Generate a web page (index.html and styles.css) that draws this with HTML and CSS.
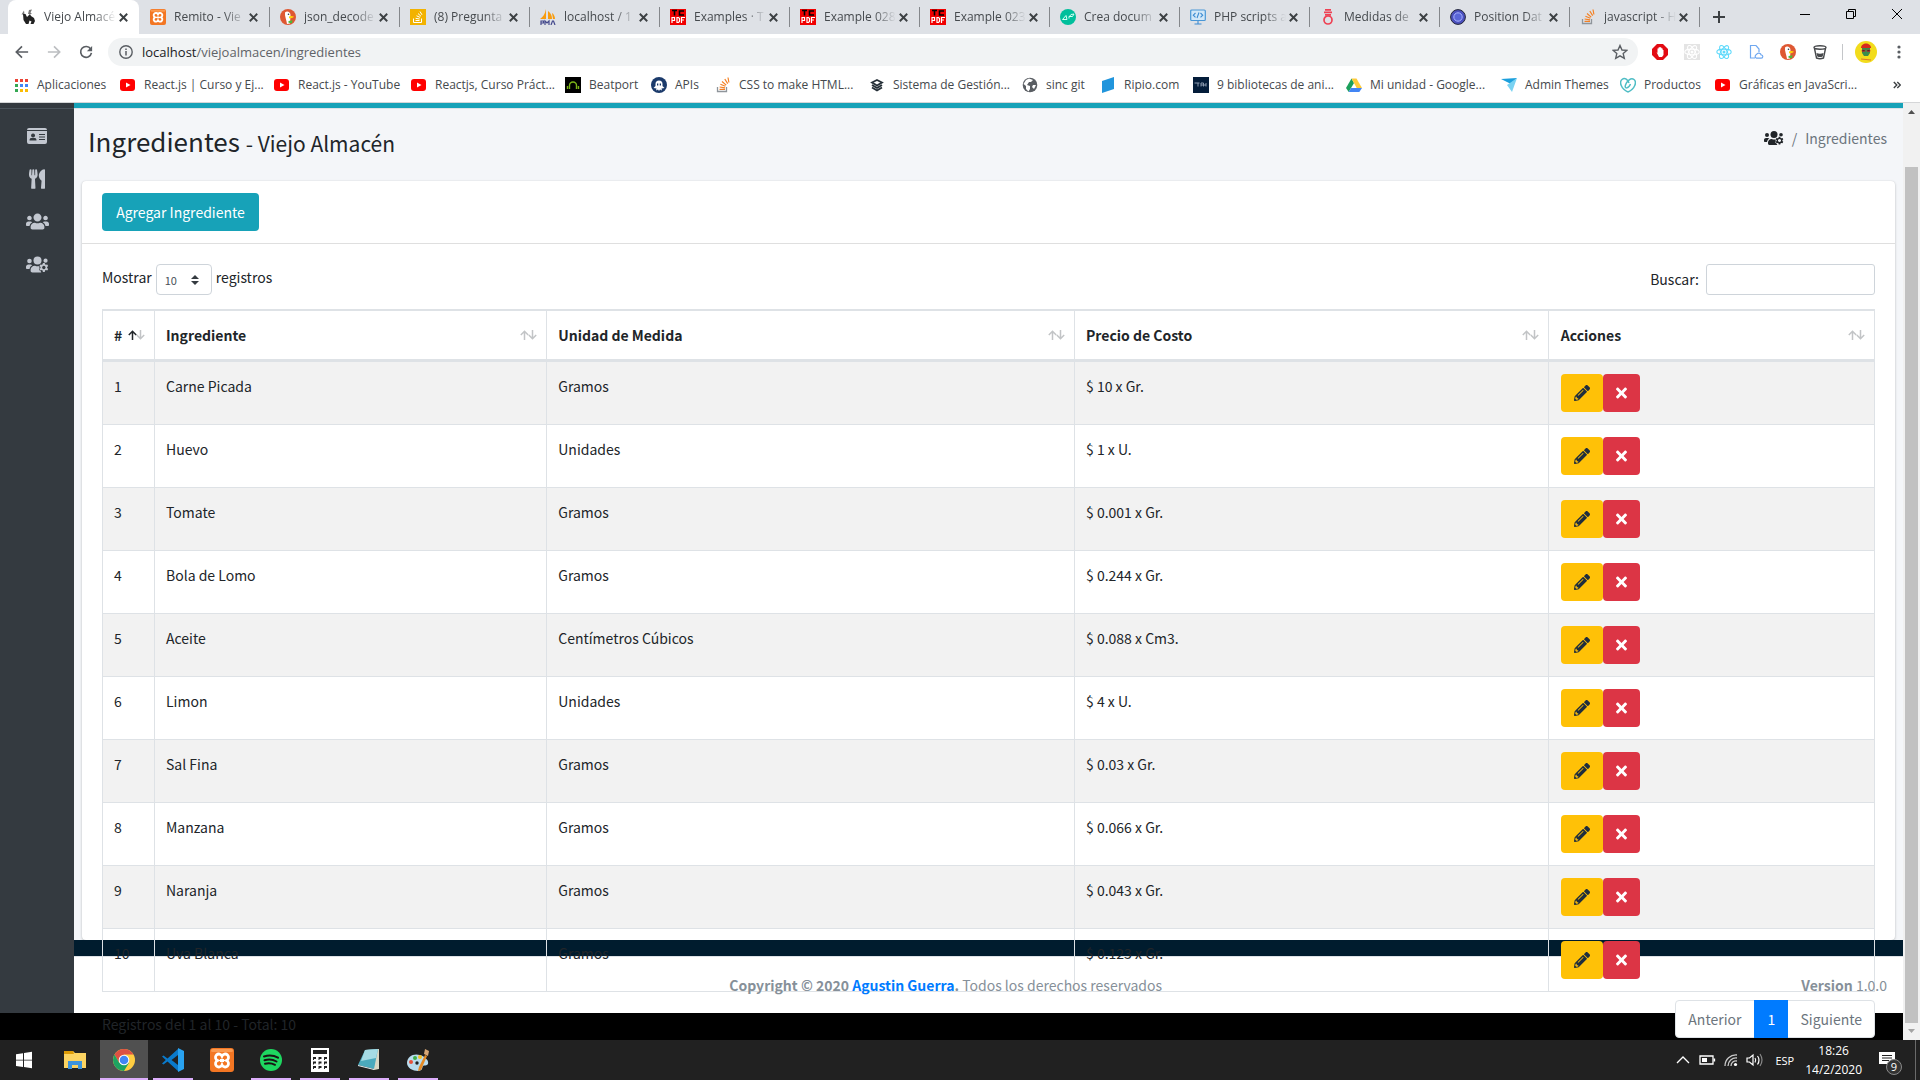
FILE: index.html
```html
<!DOCTYPE html>
<html lang="es">
<head>
<meta charset="utf-8">
<title>Ingredientes - Viejo Almacén</title>
<link rel="stylesheet" href="styles.css">
</head>
<body>
<svg class="defs" aria-hidden="true">
  <symbol id="x" viewBox="0 0 8 8"><path d="M.7.7l6.6 6.6M7.3.7L.7 7.3" stroke="#3c4043" stroke-width="1.7"/></symbol>
  <symbol id="yt" viewBox="0 0 16 16"><rect x="0" y="2" width="15" height="12" rx="3" fill="#f00"/><path d="M6 5.500l4.500 2.500L6 10.500z" fill="#fff"/></symbol>
  <symbol id="pdf" viewBox="0 0 16 16"><rect width="16" height="16" fill="#f00000"/><path d="M2 1.500h5M4.500 1.500v5M14 2h-4.500v4H14" stroke="#000" stroke-width="1.600" fill="none"/><path d="M2 14V8.500h2.500v3H2M7 8.500v5h1.500l1-1v-3l-1-1zM11.500 14V8.500H15M11.500 11H14" stroke="#fff" stroke-width="1.200" fill="none"/></symbol>
  <symbol id="so" viewBox="0 0 16 16"><path d="M2.500 10v4.500h9V10" stroke="#8f959b" stroke-width="1.300" fill="none"/><path d="M4.500 12.300h5.500M4.600 10l5.400.8M5.400 7.300l5 2M7 4.500l4.200 3.600M9.800 2l2.900 4.600M13 .5l.9 5" stroke="#f48024" stroke-width="1.200"/></symbol>
  <symbol id="xampp" viewBox="0 0 24 24"><rect width="24" height="24" rx="3" fill="#f37623"/><rect x="1" y="1" width="22" height="3" rx="1.500" fill="#fb9a50"/><path d="M7.500 12.500A3.400 3.400 0 1 1 12 8a3.400 3.400 0 1 1 4.500 4.500A3.400 3.400 0 1 1 12 17a3.400 3.400 0 1 1-4.500-4.500zM10 12.500h4" fill="none" stroke="#fff" stroke-width="2.800"/></symbol>
  <symbol id="duck" viewBox="0 0 16 16"><circle cx="8" cy="8" r="8" fill="#de5833"/><path d="M5 3.500C7 1.500 10.500 3 10.500 6l-.5 8.500-3 .5C6.500 11 4.500 7 5 3.500z" fill="#fff"/><path d="M9 7.500c2-.8 4-.5 5 .2-1.500 1.300-3 1.800-5 1.600z" fill="#fdd20a"/><path d="M8.500 12l4-.8-.5 3-3.500-.5z" fill="#4cba3c"/><circle cx="8.500" cy="5.200" r=".8" fill="#234"/></symbol>
  <symbol id="react" viewBox="0 0 16 16"><g fill="none" stroke="currentColor" stroke-width="1.100"><ellipse cx="8" cy="8" rx="7.200" ry="2.900"/><ellipse cx="8" cy="8" rx="7.200" ry="2.900" transform="rotate(60 8 8)"/><ellipse cx="8" cy="8" rx="7.200" ry="2.900" transform="rotate(120 8 8)"/></g><circle cx="8" cy="8" r="1.500" fill="currentColor"/></symbol>
  <symbol id="users" viewBox="0 0 640 512"><path d="M96 224c35.300 0 64-28.700 64-64s-28.700-64-64-64-64 28.700-64 64 28.700 64 64 64zm448 0c35.300 0 64-28.700 64-64s-28.700-64-64-64-64 28.700-64 64 28.700 64 64 64zm32 32h-64c-17.600 0-33.500 7.100-45.100 18.600 40.300 22.100 68.900 62 75.100 109.400h66c17.700 0 32-14.300 32-32v-32c0-35.300-28.700-64-64-64zm-256 0c61.900 0 112-50.100 112-112S381.900 32 320 32 208 82.100 208 144s50.100 112 112 112zm76.800 32h-8.300c-20.800 10-43.900 16-68.500 16s-47.600-6-68.500-16h-8.300C179.600 288 128 339.600 128 403.200V432c0 26.500 21.500 48 48 48h288c26.500 0 48-21.500 48-48v-28.800c0-63.600-51.600-115.200-115.200-115.200zm-223.700-13.400C161.500 263.100 145.600 256 128 256H64c-35.300 0-64 28.700-64 64v32c0 17.700 14.300 32 32 32h65.900c6.300-47.400 34.900-87.300 75.200-109.400z" fill="currentColor"/></symbol>
  <symbol id="userscog" viewBox="0 0 640 512"><g fill="currentColor"><circle cx="96" cy="160" r="64"/><circle cx="544" cy="150" r="58"/><circle cx="320" cy="144" r="112"/><path d="M173 275C161 263 146 256 128 256H64c-35 0-64 29-64 64v32c0 18 14 32 32 32h66c6-47 35-87 75-109zM252 288h-9c-63 0-115 52-115 115v29c0 27 21 48 48 48h250l-20-40-42-30 12-50-8-62c-42 18-76 9-116-10z"/><path fill-rule="evenodd" d="M470 214h52l8 38 24 14 37-12 26 45-29 26v28l29 26-26 45-37-12-24 14-8 38h-52l-8-38-24-14-37 12-26-45 29-26v-28l-29-26 26-45 37 12 24-14zM496 291a48 48 0 1 0 1 0z"/></g></symbol>
  <symbol id="utensils" viewBox="0 0 416 512"><path fill="currentColor" d="M207.900 15.200c.8 4.700 16.100 94.500 16.100 128.800 0 52.300-27.800 89.600-68.900 104.600L168 486.700c.7 13.700-10.200 25.300-24 25.300H80c-13.700 0-24.700-11.500-24-25.300l12.900-238.100C27.700 233.600 0 196.200 0 144 0 109.600 15.300 19.900 16.100 15.200 19.300-5.100 61.400-5.400 64 16.300v141.200c1.300 3.400 15.100 3.200 16 0 1.400-25.300 7.900-139.200 8-141.800 3.300-20.800 44.700-20.800 47.900 0 .2 2.700 6.600 116.500 8 141.800.9 3.200 14.800 3.400 16 0V16.300c2.600-21.600 44.800-21.400 48-1.100zm119.200 285.700l-15 185.100c-1.200 14 9.900 26 23.900 26h56c13.300 0 24-10.700 24-24V24c0-13.200-10.700-24-24-24-82.500 0-221.400 178.500-64.900 300.900z"/></symbol>
  <symbol id="pencil" viewBox="0 0 512 512"><path fill="currentColor" fill-rule="evenodd" d="M497.900 142.100l-46.100 46.100c-4.700 4.700-12.300 4.700-17 0l-111-111c-4.700-4.700-4.700-12.300 0-17l46.100-46.100c18.700-18.700 49.100-18.700 67.900 0l60.100 60.100c18.800 18.700 18.800 49.100 0 67.900zM284.200 99.800L21.600 362.400.4 483.900c-2.900 16.400 11.400 30.600 27.800 27.800l121.500-21.300 262.600-262.600c4.700-4.700 4.700-12.300 0-17l-111-111c-4.800-4.700-12.400-4.700-17.100 0zM124.100 339.900c-5.500-5.500-5.500-14.300 0-19.800l154-154c5.500-5.500 14.300-5.500 19.800 0s5.500 14.300 0 19.800l-154 154c-5.500 5.500-14.300 5.500-19.800 0zM88 424h48v36.300l-64.500 11.300-31.100-31.100L51.700 376H88v48z"/></symbol>
  <symbol id="times" viewBox="0 0 352 512"><path fill="currentColor" d="M242.720 256l100.070-100.070c12.280-12.280 12.280-32.190 0-44.480l-22.240-22.240c-12.280-12.280-32.190-12.280-44.480 0L176 189.280 75.930 89.210c-12.280-12.280-32.190-12.280-44.480 0L9.210 111.450c-12.280 12.280-12.280 32.190 0 44.480L109.280 256 9.210 356.070c-12.280 12.280-12.280 32.190 0 44.480l22.240 22.240c12.280 12.280 32.200 12.280 44.480 0L176 322.720l100.070 100.070c12.280 12.280 32.200 12.280 44.480 0l22.240-22.240c12.280-12.280 12.280-32.190 0-44.480L242.720 256z"/></symbol>
  <symbol id="sort" viewBox="0 0 17 10"><g fill="none" stroke-width="1.500"><path class="down" d="M12.500 0v8.500M8.800 5l3.700 3.700L16.200 5"/><path class="up" d="M4.500 10V1.500M.8 5l3.700-3.700L8.200 5"/></g></symbol>
</svg>

<header class="chrome">
  <div class="tabstrip">
    <div class="tab active"><svg class="ico" viewBox="0 0 16 16"><path d="M1.500 5.500l2.500-4 .5 4zM8 5l1-4 3-.5-1.500 3L12 5z" fill="#777"/><path d="M3 5h2.500l1.500 3 3-3 1 2 3 2 1 3-1.500 3h-3l1-2.500-2-1-1 3.500H6l-2.500-4z" fill="#222"/></svg><span>Viejo Almacé</span><button aria-label="Cerrar"><svg><use href="#x"/></svg></button></div>
    <div class="tab"><svg class="ico"><use href="#xampp"/></svg><span>Remito - Vie</span><button aria-label="Cerrar"><svg><use href="#x"/></svg></button></div>
    <div class="tab"><svg class="ico"><use href="#duck"/></svg><span>json_decode</span><button aria-label="Cerrar"><svg><use href="#x"/></svg></button></div>
    <div class="tab"><svg class="ico" viewBox="0 0 16 16"><rect width="16" height="16" fill="#f2b200"/><path d="M3.500 9.500v4h8v-4M5.500 11.500h4M5.600 9.300l4 .7M6.500 6.800l3.600 1.600M8 4.500l3 2.800M10 2.500l2 3.300" stroke="#fff" fill="none"/></svg><span>(8) Pregunta</span><button aria-label="Cerrar"><svg><use href="#x"/></svg></button></div>
    <div class="tab"><svg class="ico" viewBox="0 0 16 16"><path d="M6 0v10H0c3-2 5-5 6-10zM8 2c3 2 4 5 4 8H8zM12 4c2 1 3 4 3 6h-2z" fill="#f89c0e"/><path d="M1 16v-4h2.500v2H1M5 16v-4l2 2 2-2v4M11 16l1.500-4h1l1.500 4" stroke="#44498c" stroke-width="1.200" fill="none"/></svg><span>localhost / 1</span><button aria-label="Cerrar"><svg><use href="#x"/></svg></button></div>
    <div class="tab"><svg class="ico"><use href="#pdf"/></svg><span>Examples · T</span><button aria-label="Cerrar"><svg><use href="#x"/></svg></button></div>
    <div class="tab"><svg class="ico"><use href="#pdf"/></svg><span>Example 028</span><button aria-label="Cerrar"><svg><use href="#x"/></svg></button></div>
    <div class="tab"><svg class="ico"><use href="#pdf"/></svg><span>Example 023</span><button aria-label="Cerrar"><svg><use href="#x"/></svg></button></div>
    <div class="tab"><svg class="ico" viewBox="0 0 16 16"><circle cx="8" cy="8" r="8" fill="#00bf9c"/><path d="M2.500 10.500h4.500L6 6.500zM9 8l2-2.500 3-.5-1.500 2.500H9v2" stroke="#d5fff5" fill="none"/></svg><span>Crea docum</span><button aria-label="Cerrar"><svg><use href="#x"/></svg></button></div>
    <div class="tab"><svg class="ico" viewBox="0 0 16 16"><rect x=".7" y="1" width="14.600" height="10.500" rx="1" fill="#d3e8f8" stroke="#4a97d6" stroke-width="1.200"/><path d="M8 12v3M4.500 15h7M5.500 4L3.300 6.200l2.200 2.200M10.500 4l2.200 2.200-2.200 2.200M9 3.500L7 9" stroke="#3d8cd2" stroke-width="1.100" fill="none"/></svg><span>PHP scripts a</span><button aria-label="Cerrar"><svg><use href="#x"/></svg></button></div>
    <div class="tab"><svg class="ico" viewBox="0 0 16 16"><g fill="none" stroke="#ee4153" stroke-width="1.700"><circle cx="8" cy="11" r="4"/><path d="M5 .9h6M4 3.400h8M5 5.900h6"/></g></svg><span>Medidas de</span><button aria-label="Cerrar"><svg><use href="#x"/></svg></button></div>
    <div class="tab"><svg class="ico" viewBox="0 0 16 16"><circle cx="8" cy="8" r="7.400" fill="#4b50bd" stroke="#232637"/><circle cx="8" cy="8" r="4.200" fill="#5a66d8" stroke="#a9b2ff"/></svg><span>Position Dat</span><button aria-label="Cerrar"><svg><use href="#x"/></svg></button></div>
    <div class="tab"><svg class="ico"><use href="#so"/></svg><span>javascript - H</span><button aria-label="Cerrar"><svg><use href="#x"/></svg></button></div>
    <button class="newtab" aria-label="Nueva pestaña"><svg viewBox="0 0 12 12"><path d="M6 0v12M0 6h12" stroke="#3c4043" stroke-width="2"/></svg></button>
    <div class="winctl">
      <button aria-label="Minimizar"><svg viewBox="0 0 10 10"><path d="M0 5.500h10" stroke="#000"/></svg></button>
      <button aria-label="Restaurar"><svg viewBox="0 0 10 10"><path d="M.5 2.500h7v7h-7zM2.500 2.500v-2h7v7h-2" fill="none" stroke="#000"/></svg></button>
      <button aria-label="Cerrar ventana"><svg viewBox="0 0 10 10"><path d="M0 0l10 10M10 0L0 10" stroke="#000"/></svg></button>
    </div>
  </div>

  <div class="toolbar">
    <button class="nav" aria-label="Atrás"><svg viewBox="0 0 16 16"><path d="M15 8H2M8 1.500L1.500 8 8 14.500" fill="none" stroke="#5a5e63" stroke-width="1.900"/></svg></button>
    <button class="nav" aria-label="Adelante"><svg viewBox="0 0 16 16"><path d="M1 8h13M8 1.500L14.500 8 8 14.500" fill="none" stroke="#bcbec1" stroke-width="1.900"/></svg></button>
    <button class="nav" aria-label="Recargar"><svg viewBox="0 0 16 16"><path d="M13.300 4.500A6.200 6.200 0 1 0 14.200 9" fill="none" stroke="#5a5e63" stroke-width="1.900"/><path d="M15 1v6H9z" fill="#5a5e63"/></svg></button>
    <div class="omnibox">
      <svg viewBox="0 0 14 14"><circle cx="7" cy="7" r="6.200" fill="none" stroke="#5a5e63" stroke-width="1.400"/><path d="M7 6v4.500M7 3.500V5" stroke="#5a5e63" stroke-width="1.500"/></svg>
      <span class="url"><b>localhost</b>/viejoalmacen/ingredientes</span>
      <svg class="star" viewBox="0 0 16 16"><path d="M8 1.500l2 4.500 4.800.4-3.600 3.200 1.100 4.800L8 11.800l-4.300 2.600 1.100-4.800L1.200 6.400 6 6z" fill="none" stroke="#5a5e63" stroke-width="1.400"/></svg>
    </div>
    <div class="exts">
      <svg viewBox="0 0 16 16"><path d="M5 0h6l5 5v6l-5 5H5l-5-5V5z" fill="#e30b13"/><path d="M4.500 8l1 1V4.500h1V3.500h1V3h1.200v.7h1v.8h1V6h.8v5L10 13H7z" fill="#fff"/></svg>
      <svg class="off" viewBox="0 0 16 16"><use href="#react"/></svg>
      <svg class="on" viewBox="0 0 16 16"><use href="#react"/></svg>
      <svg viewBox="0 0 16 16"><path d="M7 14H2.500V1.500H8L11 5v3M8 14a2 2 0 0 1 .5-3.500 2.500 2.500 0 0 1 4.700.5 1.600 1.600 0 0 1 0 3.200H8" fill="none" stroke="#70a8f0" stroke-width="1.200"/></svg>
      <svg viewBox="0 0 16 16"><use href="#duck"/></svg>
      <svg viewBox="0 0 16 16"><ellipse cx="8" cy="3.500" rx="6" ry="1.800" fill="none" stroke="#47494c" stroke-width="1.400"/><path d="M2.500 4.500l2 9.500q3.500 1.500 7 0l2-9.500" fill="none" stroke="#47494c" stroke-width="1.400"/><path d="M4.500 9q3.500 1.500 7 0l-.8 3.500q-2.700 1-5.400 0z" fill="#47494c"/></svg>
      <i></i>
      <svg class="avatar" viewBox="0 0 22 22"><circle cx="11" cy="11" r="11" fill="#f2dc1c"/><path d="M6 7c0-6 10-6 10 0z" fill="#d62a1f"/><path d="M7 7h8v5l-2 3H9l-2-3z" fill="#3b8b4c"/><path d="M7 9h3v1.500H7zM12 9h3v1.500h-3zM6 18l10 1" fill="#222" stroke="#c33" stroke-width=".6"/></svg>
      <svg class="dots" viewBox="0 0 4 14"><g fill="#5a5e63"><circle cx="2" cy="2" r="1.600"/><circle cx="2" cy="7" r="1.600"/><circle cx="2" cy="12" r="1.600"/></g></svg>
    </div>
  </div>

  <nav class="bookmarks">
    <a href="#"><svg class="ico" viewBox="0 0 16 16"><path d="M2 2h3v3H2zM7 2h3v3H7zM12 2h3v3h-3z" fill="#ea4335"/><path d="M2 7h3v3H2z" fill="#34a853"/><path d="M7 7h3v3H7zM12 7h3v3h-3z" fill="#4285f4"/><path d="M2 12h3v3H2z" fill="#34a853"/><path d="M7 12h3v3H7zM12 12h3v3h-3z" fill="#fbbc05"/></svg><span>Aplicaciones</span></a>
    <a href="#"><svg class="ico"><use href="#yt"/></svg><span>React.js | Curso y Ej...</span></a>
    <a href="#"><svg class="ico"><use href="#yt"/></svg><span>React.js - YouTube</span></a>
    <a href="#"><svg class="ico"><use href="#yt"/></svg><span>Reactjs, Curso Práct...</span></a>
    <a href="#"><svg class="ico" viewBox="0 0 16 16"><rect width="16" height="16" fill="#000"/><path d="M4.500 12V8.500a3.500 3.500 0 0 1 7 0V12M2.500 9v3M13.500 9v3" stroke="#7cb518" stroke-width="1.400" fill="none"/></svg><span>Beatport</span></a>
    <a href="#"><svg class="ico" viewBox="0 0 16 16"><circle cx="8" cy="8" r="8" fill="#1b3a6b"/><path d="M4.500 7a3.500 3.500 0 0 1 7 0v2l2 2-3 .5.5 2-2-1L8 14l-1-1.500-2 1 .5-2-3-.5 2-2z" fill="#fff"/><path d="M6 6.500h1.300v2H6zM8.700 6.500H10v2H8.700z" fill="#1b3a6b"/></svg><span>APIs</span></a>
    <a href="#"><svg class="ico"><use href="#so"/></svg><span>CSS to make HTML...</span></a>
    <a href="#"><svg class="ico" viewBox="0 0 16 16"><path d="M8 3l5 2.500-5 3-5-3zM3 10.500l5 3 5-3M3 8l5 3 5-3" fill="none" stroke="#263038" stroke-width="1.800"/></svg><span>Sistema de Gestión...</span></a>
    <a href="#"><svg class="ico" viewBox="0 0 16 16"><circle cx="8" cy="8" r="7.300" fill="#5a5e63"/><path d="M7 1.500l4 1.500-2 2H7L5 8l3 1v3l-1.500 2.500L4 12V9L1.500 7 4 3zM11 8h3l-2 4-2-2z" fill="#fff"/></svg><span>sinc git</span></a>
    <a href="#"><svg class="ico" viewBox="0 0 16 16"><path d="M2 4l12-4v12L2 16z" fill="#2195dc"/></svg><span>Ripio.com</span></a>
    <a href="#"><svg class="ico" viewBox="0 0 16 16"><rect width="16" height="16" fill="#041d3a"/><path d="M1.500 6h5M5 6v3.500M8 9.500V6h2.500v3.500M8 8h5M13 6v3.500" stroke="#8b9bb0" fill="none"/></svg><span>9 bibliotecas de ani...</span></a>
    <a href="#"><svg class="ico" viewBox="0 0 16 16"><path d="M5.500 1.500L0 11l2.700 4L8 6z" fill="#1ba05b"/><path d="M5.500 1.500h5L16 11h-5.300z" fill="#fdcb3c"/><path d="M5 11h11l-2.700 4H2.700z" fill="#4285f4"/></svg><span>Mi unidad - Google...</span></a>
    <a href="#"><svg class="ico" viewBox="0 0 16 16"><path d="M0 2l16-1-6 6z" fill="#1b9fdc"/><path d="M16 1l-5 14-5-7z" fill="#79d2f2"/></svg><span>Admin Themes</span></a>
    <a href="#"><svg class="ico" viewBox="0 0 16 16"><path d="M8 15C1 12-1 5 2 2.500S8 3 9 6M8 15c7-3 9-10 6-12.500S7 4 5.500 8s3 4 5-1" fill="none" stroke="#4fbdc5" stroke-width="1.500"/></svg><span>Productos</span></a>
    <a href="#"><svg class="ico"><use href="#yt"/></svg><span>Gráficas en JavaScri...</span></a>
    <button aria-label="Más marcadores"><svg viewBox="0 0 8 8"><path d="M.8 1l3 3-3 3M4.300 1l3 3-3 3" fill="none" stroke="#3c4043" stroke-width="1.400"/></svg></button>
  </nav>
</header>

<div class="viewport">
  <div class="app">
    <aside class="sidebar">
      <a href="#" aria-label="Clientes"><svg class="w20" viewBox="0 0 20 16"><path fill="currentColor" fill-rule="evenodd" d="M0 2a2 2 0 0 1 2-2h16a2 2 0 0 1 2 2H0zM0 3h20v11a2 2 0 0 1-2 2H2a2 2 0 0 1-2-2zM6 5.500a2 2 0 1 0 .1 0zM2.500 12.500h7c0-2-1-2.500-2-2.500h-3c-1 0-2 .5-2 2.500zM12 6v1h6V6zM12 8.500v1h6v-1zM12 11v1h6v-1z"/></svg></a>
      <a href="#" aria-label="Platos"><svg class="w16"><use href="#utensils"/></svg></a>
      <a href="#" aria-label="Usuarios"><svg class="w23"><use href="#users"/></svg></a>
      <a href="#" aria-label="Administración"><svg class="w23"><use href="#userscog"/></svg></a>
    </aside>
    <main class="content">
      <div class="page-head">
        <h1>Ingredientes <small>- Viejo Almacén</small></h1>
        <ol class="crumbs"><li><a href="#" aria-label="Inicio"><svg><use href="#userscog"/></svg></a></li><li>Ingredientes</li></ol>
      </div>
      <section class="card">
        <div class="card-head"><button class="btn add">Agregar Ingrediente</button></div>
        <div class="card-body">
          <div class="filters">
            <label class="len">Mostrar <span class="sel"><select><option>10</option><option>25</option></select><svg viewBox="0 0 8 10"><path d="M0 4l4-4 4 4zM0 6l4 4 4-4z" fill="#343a40"/></svg></span> registros</label>
            <label class="search">Buscar: <input type="search"></label>
          </div>
          <table>
            <colgroup><col class="c1"><col class="c2"><col class="c3"><col class="c4"><col class="c5"></colgroup>
            <thead><tr>
              <th><div class="asc">#<svg><use href="#sort"/></svg></div></th>
              <th><div>Ingrediente<svg><use href="#sort"/></svg></div></th>
              <th><div>Unidad de Medida<svg><use href="#sort"/></svg></div></th>
              <th><div>Precio de Costo<svg><use href="#sort"/></svg></div></th>
              <th><div>Acciones<svg><use href="#sort"/></svg></div></th>
            </tr></thead>
            <tbody>
              <tr><td>1</td><td>Carne Picada</td><td>Gramos</td><td>$ 10 x Gr.</td><td><div class="acts"><button class="btn edit" aria-label="Editar"><svg><use href="#pencil"/></svg></button><button class="btn del" aria-label="Eliminar"><svg><use href="#times"/></svg></button></div></td></tr>
              <tr><td>2</td><td>Huevo</td><td>Unidades</td><td>$ 1 x U.</td><td><div class="acts"><button class="btn edit" aria-label="Editar"><svg><use href="#pencil"/></svg></button><button class="btn del" aria-label="Eliminar"><svg><use href="#times"/></svg></button></div></td></tr>
              <tr><td>3</td><td>Tomate</td><td>Gramos</td><td>$ 0.001 x Gr.</td><td><div class="acts"><button class="btn edit" aria-label="Editar"><svg><use href="#pencil"/></svg></button><button class="btn del" aria-label="Eliminar"><svg><use href="#times"/></svg></button></div></td></tr>
              <tr><td>4</td><td>Bola de Lomo</td><td>Gramos</td><td>$ 0.244 x Gr.</td><td><div class="acts"><button class="btn edit" aria-label="Editar"><svg><use href="#pencil"/></svg></button><button class="btn del" aria-label="Eliminar"><svg><use href="#times"/></svg></button></div></td></tr>
              <tr><td>5</td><td>Aceite</td><td>Centímetros Cúbicos</td><td>$ 0.088 x Cm3.</td><td><div class="acts"><button class="btn edit" aria-label="Editar"><svg><use href="#pencil"/></svg></button><button class="btn del" aria-label="Eliminar"><svg><use href="#times"/></svg></button></div></td></tr>
              <tr><td>6</td><td>Limon</td><td>Unidades</td><td>$ 4 x U.</td><td><div class="acts"><button class="btn edit" aria-label="Editar"><svg><use href="#pencil"/></svg></button><button class="btn del" aria-label="Eliminar"><svg><use href="#times"/></svg></button></div></td></tr>
              <tr><td>7</td><td>Sal Fina</td><td>Gramos</td><td>$ 0.03 x Gr.</td><td><div class="acts"><button class="btn edit" aria-label="Editar"><svg><use href="#pencil"/></svg></button><button class="btn del" aria-label="Eliminar"><svg><use href="#times"/></svg></button></div></td></tr>
              <tr><td>8</td><td>Manzana</td><td>Gramos</td><td>$ 0.066 x Gr.</td><td><div class="acts"><button class="btn edit" aria-label="Editar"><svg><use href="#pencil"/></svg></button><button class="btn del" aria-label="Eliminar"><svg><use href="#times"/></svg></button></div></td></tr>
              <tr><td>9</td><td>Naranja</td><td>Gramos</td><td>$ 0.043 x Gr.</td><td><div class="acts"><button class="btn edit" aria-label="Editar"><svg><use href="#pencil"/></svg></button><button class="btn del" aria-label="Eliminar"><svg><use href="#times"/></svg></button></div></td></tr>
              <tr><td>10</td><td>Uva Blanca</td><td>Gramos</td><td>$ 0.123 x Gr.</td><td><div class="acts"><button class="btn edit" aria-label="Editar"><svg><use href="#pencil"/></svg></button><button class="btn del" aria-label="Eliminar"><svg><use href="#times"/></svg></button></div></td></tr>
            </tbody>
          </table>
          <div class="table-foot">
            <p>Registros del 1 al 10 - Total: 10</p>
            <div class="pager"><button>Anterior</button><button class="cur">1</button><button>Siguiente</button></div>
          </div>
        </div>
      </section>
      <div class="band"></div>
      <footer class="foot">
        <p class="copy"><strong>Copyright © 2020 <a href="#">Agustin Guerra</a>.</strong> Todos los derechos reservados</p>
        <p><b>Version</b> 1.0.0</p>
      </footer>
    </main>
  </div>
  <div class="scroll"><svg viewBox="0 0 7 4"><path d="M0 4l3.500-4L7 4z" fill="#505050"/></svg><div class="track"><div class="thumb"></div></div><svg viewBox="0 0 7 4"><path d="M0 0l3.500 4L7 0z" fill="#a3a3a3"/></svg></div>
</div>

<footer class="taskbar">
  <button class="start" aria-label="Inicio"><svg viewBox="0 0 24 24"><path d="M4 6.200l7-1v6.500H4zM12 5l8-1.200v7.900h-8zM4 12.500h7V19l-7-1zM12 12.500h8v7.800L12 19z" fill="#fff"/></svg></button>
  <button aria-label="Explorador"><svg viewBox="0 0 24 24"><path d="M1 3h9l2 2h11v15H1z" fill="#fcd462"/><path d="M1 3h9l1 3H1z" fill="#dd9b06"/><path d="M5 21v-8h14v8h-4v-4H9v4z" fill="#3d94dc"/></svg></button>
  <button class="run now" aria-label="Chrome"><svg viewBox="0 0 24 24"><circle cx="12" cy="12" r="11" fill="#ffcd41"/><path d="M2.500 6.500A11 11 0 0 1 21.500 6.500H12L7.200 14.700z" fill="#dd5144"/><path d="M2.500 6.500a11 11 0 0 0 9.500 16.500l5-8.200-9.800 0z" fill="#1da362"/><circle cx="12" cy="12" r="5.300" fill="#fff"/><circle cx="12" cy="12" r="4.300" fill="#4286f5"/></svg></button>
  <button class="run" aria-label="Code"><svg viewBox="0 0 24 24"><path d="M17 1L6.500 10.500 2.500 7.500 1 8.500 4.800 12 1 15.500l1.500 1 4-3L17 23z" fill="#0a7acb"/><path d="M17 0l6 3v18l-6 3z" fill="#29a2f0"/><path d="M17 7v10l-6.500-5z" fill="#212121"/></svg></button>
  <button aria-label="XAMPP"><svg><use href="#xampp"/></svg></button>
  <button class="run" aria-label="Spotify"><svg viewBox="0 0 24 24"><circle cx="12" cy="12" r="11" fill="#1ed760"/><path d="M5 8.500c5-1.500 10-1 14 1.200M5.500 12.300c4-1.200 8.500-.8 12 1.200M6 15.800c4-1 7-.5 10 1" fill="none" stroke="#191414" stroke-width="2" stroke-linecap="round"/></svg></button>
  <button class="run" aria-label="Calculadora"><svg viewBox="0 0 24 24"><path d="M3 0h18v24H3z" fill="#fff"/><path d="M5 2h14v4H5zM5 9h3v2H6v1H5zM10.500 9h3v2h-2v1h-1zM16 9h3v2h-2v1h-1zM5 13.500h3v2H6v1H5zM10.500 13.500h3v2h-2v1h-1zM16 13.500h3v2h-2v1h-1zM5 18h3v2H6v1H5zM10.500 18h3v2h-2v1h-1zM16 18h3v2h-2v1h-1z" fill="#222"/></svg></button>
  <button class="run" aria-label="Bloc de notas"><svg viewBox="0 0 24 24"><path d="M8 2l14-1v20l-5 1z" fill="#d9d6c4"/><path d="M8 2l13-1-4 20-16-4z" fill="#4ba9bd"/><path d="M8 2l13-1-2 9-15 3z" fill="#a5dbe4"/><path d="M1 17l16 4v1L1 18z" fill="#e8eef0"/></svg></button>
  <button class="run" aria-label="Paint"><svg viewBox="0 0 24 24"><path d="M1 15C1 8 8 5 14 7s9 6 8 9c-1 2-4 1-5 2s0 5-5 5S1 20 1 15z" fill="#b9dcee"/><circle cx="5" cy="14" r="2" fill="#e8503a"/><circle cx="9" cy="10" r="2" fill="#3fae49"/><circle cx="14" cy="9" r="2" fill="#f6c026"/><circle cx="11" cy="15" r="1.700" fill="#212121"/><path d="M19 7l2 1-6 14-3 1 1-4z" fill="#e58a25"/><path d="M18 6l1-5 4 2-1 5z" fill="#d6a676"/></svg></button>
  <div class="tray">
    <svg class="t1" viewBox="0 0 24 20"><path d="M6 13l6-6 6 6" fill="none" stroke="#fff" stroke-width="1.300"/></svg>
    <svg class="t1" viewBox="0 0 24 20"><path d="M5 6h13v8H5zM19.500 8.500v3" fill="none" stroke="#fff" stroke-width="1.300"/><path d="M7 8h5v4H7z" fill="#fff"/></svg>
    <svg class="t1" viewBox="0 0 24 20"><g fill="none" stroke="#c9c9c9" stroke-width="1.300"><path d="M6 16A11 11 0 0 1 18 5M9 16a8 8 0 0 1 9-8M12 16a5 5 0 0 1 6-5"/></g><circle cx="16.500" cy="14.500" r="1.600" fill="#fff"/></svg>
    <svg class="t1" viewBox="0 0 24 20"><path d="M4 8h2.500L10 5v10l-3.500-3H4zM12 8q1.500 2 0 4.500M14.500 6q3 4 0 8.500" fill="none" stroke="#fff" stroke-width="1.200"/><path d="M17 4q4 6 0 12" fill="none" stroke="#888" stroke-width="1.200"/></svg>
    <span class="lang">ESP</span>
    <time>18:26<br>14/2/2020</time>
    <div class="notif"><svg viewBox="0 0 16 16"><path d="M0 0h16v12h-5l-3 3v-3H0z" fill="#fff"/><path d="M3 3.500h10M3 6h10M3 8.500h7" stroke="#212121"/></svg><span>9</span></div>
  </div>
</footer>
</body>
</html>
```

FILE: styles.css
```css
* { box-sizing: border-box; }

body {
  margin: 0;
  height: 100vh;
  display: flex;
  flex-direction: column;
  overflow: hidden;
  background: #000;
  font: 14px/24px "Noto Sans CJK SC", "Noto Sans", sans-serif;
  color: #212529;
}

button {
  border: 0;
  padding: 0;
  background: none;
  font: inherit;
  color: inherit;
}

a { color: inherit; text-decoration: none; }
p { margin: 0; }
svg { display: block; flex: none; }
.defs { position: absolute; width: 0; height: 0; }
.ico { width: 16px; height: 16px; }

/* Browser window */
.chrome {
  flex: none;
  font: 12px/16px "Open Sans", "Noto Sans", sans-serif;
  color: #45494d;
  background: #fff;
  border-bottom: 1px solid #d5d6d8;
}

.tabstrip {
  display: flex;
  height: 34px;
  padding-left: 8px;
  background: #dee1e6;
}

.tab {
  width: 130px;
  display: flex;
  align-items: center;
  padding: 0 11px;
  position: relative;
}
.tab::after {
  content: "";
  position: absolute;
  right: -1px;
  top: 7px;
  width: 1px;
  height: 20px;
  background: #84878b;
}
.tab.active {
  width: 131px;
  padding-left: 12px;
  background: #fff;
  border-radius: 8px 8px 0 0;
}
.tab.active::after { display: none; }
.tab span {
  flex: 1;
  min-width: 0;
  margin: 0 0 0 8px;
  white-space: nowrap;
  -webkit-mask-image: linear-gradient(to right, #000 50px, transparent 72px);
  mask-image: linear-gradient(to right, #000 50px, transparent 72px);
}
.tab button svg { width: 9px; height: 9px; }

.newtab { padding: 0 14px; }
.newtab svg { width: 12px; height: 12px; }

.winctl { display: flex; margin-left: auto; height: 28px; }
.winctl button { width: 46px; display: grid; place-items: center; }
.winctl svg { width: 10px; height: 10px; }

.toolbar {
  display: flex;
  align-items: center;
  height: 34px;
  padding: 2px 19px 0 6px;
}
.nav { width: 32px; display: grid; place-items: center; }
.nav svg { width: 14px; height: 14px; }

.omnibox {
  flex: 1;
  display: flex;
  align-items: center;
  gap: 9px;
  height: 28px;
  margin-left: 6px;
  padding: 0 10px 0 11px;
  border-radius: 14px;
  background: #f1f3f4;
}
.omnibox svg { width: 14px; height: 14px; }
.omnibox .star { width: 16px; height: 16px; }
.url { flex: 1; font-size: 13px; color: #5f6368; }
.url b { font-weight: 400; color: #202124; }

.exts { display: flex; align-items: center; gap: 16px; margin-left: 14px; }
.exts svg { width: 16px; height: 16px; }
.exts .off { background: #e4e4e4; color: #fff; }
.exts .on { color: #61dafb; }
.exts i { width: 1px; height: 16px; margin-left: -2px; background: #c4c6c9; }
.exts .avatar { width: 22px; height: 22px; margin-left: -4px; }
.exts .dots { width: 4px; height: 14px; margin-left: 4px; }

.bookmarks {
  display: grid;
  grid-template-columns: 107px 154px 137px 154px 86px 64px 154px 153px 78px 93px 153px 155px 119px 95px 1fr auto;
  align-items: center;
  height: 34px;
  padding: 0 19px 0 13px;
}
.bookmarks a { display: flex; align-items: center; gap: 8px; white-space: nowrap; }
.bookmarks button svg { width: 8px; height: 8px; }

/* Page area */
.viewport { flex: 1; min-height: 0; display: flex; }

.app {
  flex: 1;
  min-width: 0;
  display: flex;
  padding-bottom: 27px;
  overflow: hidden;
}

.sidebar {
  flex: none;
  width: 74px;
  padding-top: 6px;
  background: linear-gradient(#4b545c, #4b545c) 0 5px / 100% 1px no-repeat #343a40;
  color: #c2c7d0;
}
.sidebar a { height: 43px; display: grid; place-items: center; padding-top: 10px; }
.w16 { width: 16px; height: 20px; }
.w20 { width: 20px; height: 16px; }
.w23 { width: 23px; height: 19px; }

.content {
  flex: 1;
  min-width: 0;
  display: flex;
  flex-direction: column;
  border-top: 5px solid #17a2b8;
  background: #f4f6f9;
}

.page-head {
  display: flex;
  justify-content: space-between;
  align-items: flex-start;
  padding: 14px 16px 0 14px;
  height: 73px;
  border-top: 1px solid #dee2e6;
}
h1 { margin: 0; font-weight: 400; font-size: 26px; line-height: 35px; }
h1 small { font-size: 21px; }

.crumbs { display: flex; margin: 3px 0 0; padding: 0; list-style: none; color: #6c757d; }
.crumbs li { display: flex; align-items: center; }
.crumbs li + li::before { content: "/"; padding: 0 8px; }
.crumbs a { color: #212529; }
.crumbs svg { width: 20px; height: 16px; }

.card {
  flex: 1;
  min-height: 0;
  margin: 0 8px;
  border-radius: 4px;
  background: #fff;
  box-shadow: 0 0 1px rgba(0,0,0,.13), 0 1px 3px rgba(0,0,0,.2);
}
.card-head { padding: 12px 20px; border-bottom: 1px solid #dfdfdf; }
.card-body { position: relative; z-index: 1; padding: 20px; }

.btn { height: 38px; border-radius: 4px; display: block; }
.add { min-width: 157px; background: #17a2b8; color: #fff; }

.filters { display: flex; justify-content: space-between; align-items: flex-start; height: 45px; }
.len { display: flex; gap: 4px; line-height: 26px; }
.sel { position: relative; }
.sel svg { position: absolute; right: 13px; top: 11px; width: 8px; height: 10px; }
.sel select {
  display: block;
  width: 56px;
  height: 31px;
  padding: 0 8px;
  appearance: none;
  border: 1px solid #ced4da;
  border-radius: 4px;
  background: #fff;
  font: 11px/24px "Noto Sans CJK SC", sans-serif;
  color: #495057;
}
.search { display: flex; gap: 7px; line-height: 31px; }
.search input { width: 169px; height: 31px; border: 1px solid #ced4da; border-radius: 3px; padding: 0 8px; font: inherit; }

table {
  width: 100%;
  table-layout: fixed;
  border-collapse: separate;
  border-spacing: 0;
  border: 1px solid #dee2e6;
}
.c1 { width: 52px; }
.c2 { width: 22.15%; }
.c3 { width: 29.8%; }
.c4 { width: 26.75%; }
th, td {
  border-top: 1px solid #dee2e6;
  border-right: 1px solid #dee2e6;
  padding: 12px 12px 12px 11px;
  text-align: left;
  vertical-align: top;
}
th:last-child, td:last-child { border-right: 0; padding-left: 12px; }
th { border-bottom: 2px solid #dee2e6; padding-right: 9px; }
th div { display: flex; justify-content: space-between; align-items: center; }
th svg { width: 17px; height: 10px; color: #c2c4c6; }
.up { stroke: var(--up, currentColor); }
.down { stroke: currentColor; }
.asc { --up: #212529; }
tbody tr:nth-child(odd) { background: #f2f2f2; }

.acts { display: flex; }
.edit { padding: 0 13px; background: #ffc107; color: #1f2d3d; }
.edit svg { width: 16px; height: 16px; }
.del { padding: 0 13px; background: #dc3545; color: #fff; }
.del svg { width: 11px; height: 16px; }

.table-foot { display: flex; justify-content: space-between; margin-top: 8px; }
.table-foot p { padding-top: 12px; }
.pager { display: flex; height: 38px; border: 1px solid #dee2e6; border-radius: 4px; background: #fff; color: #6c757d; }
.pager button { padding: 0 12px; }
.pager button:first-child { padding: 0 13px 0 12px; }
.pager .cur { width: 34px; margin: -1px 0; background: #007bff; color: #fff; }

.band { flex: none; height: 16px; background: #001c2e; }
.foot {
  flex: none;
  display: flex;
  padding: 16px;
  border-top: 1px solid #dee2e6;
  background: #fff;
  color: #869099;
}
.foot p { position: relative; z-index: 2; }
.foot a { color: #007bff; }
.copy { flex: 1; text-align: center; }

.scroll {
  flex: none;
  width: 17px;
  display: flex;
  flex-direction: column;
  align-items: center;
  justify-content: space-between;
  padding: 7px 0;
  background: #f1f1f1;
}
.scroll svg { width: 7px; height: 4px; }
.track { flex: 1; width: 13px; padding: 53px 0 0; margin-bottom: 6px; }
.thumb { height: 100%; background: #c1c1c1; }

/* Taskbar */
.taskbar {
  flex: none;
  display: flex;
  gap: 1px;
  height: 40px;
  background: #212121;
  color: #fff;
  font: 12px/19px "Open Sans", "Noto Sans", sans-serif;
}
.taskbar > button { position: relative; width: 48px; display: grid; place-items: center; }
.taskbar > button svg { width: 24px; height: 24px; }
.start { margin-right: 2px; }
.now { background: #505050; }
.run::after {
  content: "";
  position: absolute;
  left: 4px;
  right: 4px;
  bottom: 0;
  height: 2px;
  background: #dcaefb;
}
.now::after { left: 0; right: 0; }

.tray {
  display: flex;
  align-items: center;
  margin: 0 4px 0 auto;
  padding-right: 20px;
  border-right: 1px solid #6a6a6a;
}
.t1 { width: 24px; height: 20px; }
.lang { margin: 0 11px 0 8px; font-size: 11px; }
time { text-align: center; }
.notif { position: relative; margin-left: 17px; }
.notif svg { width: 16px; height: 16px; }
.notif span {
  position: absolute;
  left: 7px;
  top: 7px;
  width: 16px;
  height: 16px;
  border: 1px solid #8a8a8a;
  border-radius: 50%;
  background: #333;
  font-size: 11px;
  line-height: 14px;
  text-align: center;
}
```
